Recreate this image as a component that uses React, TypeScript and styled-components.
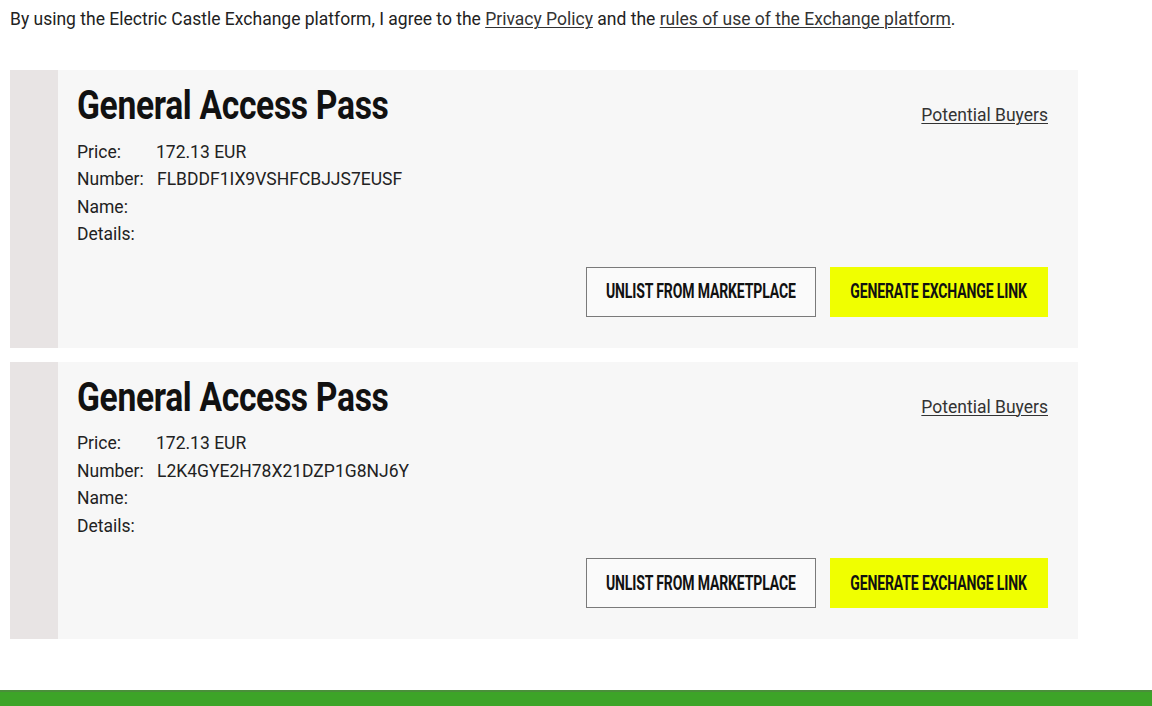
import React from 'react';
import styled, { createGlobalStyle } from 'styled-components';

const GlobalStyle = createGlobalStyle`
  html, body {
    margin: 0;
    padding: 0;
    background: #fff;
  }
  body {
    font-family: Roboto, "Liberation Sans", sans-serif;
    color: #222;
  }
`;

const Page = styled.div`
  width: 1152px;
  height: 706px;
  display: flex;
  flex-direction: column;
  overflow: hidden;
`;

const Content = styled.main`
  flex: 1;
  padding: 0 10px;
`;

const Agreement = styled.p`
  margin: 0;
  padding-top: 7px;
  font-size: 17.5px;
  line-height: 24px;
  color: #222;
`;

const TextLink = styled.a`
  color: #333;
  text-decoration: underline;
  text-underline-offset: 2px;
  text-decoration-thickness: 1px;
`;

const List = styled.div`
  margin-top: 39px;
  width: 1068px;
  display: flex;
  flex-direction: column;
  gap: 14px;
`;

const Card = styled.article`
  display: flex;
  height: 277.5px;
  background: #f7f7f7;
`;

const Stripe = styled.div`
  width: 48px;
  flex-shrink: 0;
  background: #e8e4e4;
`;

const Body = styled.div`
  flex: 1;
  display: flex;
  flex-direction: column;
  padding: 13px 30px 31px 19px;
`;

const Header = styled.div`
  display: flex;
  justify-content: space-between;
  align-items: flex-start;
`;

// condensed display face: no condensed family installed, so squeeze Roboto
const Title = styled.h2`
  margin: 0;
  display: inline-block;
  font-family: Roboto, "Liberation Sans", sans-serif;
  font-weight: 700;
  font-size: 41px;
  line-height: 44px;
  color: #111;
  letter-spacing: -0.4px;
  white-space: nowrap;
  transform: scaleX(0.82);
  transform-origin: left center;
`;

const BuyersLink = styled(TextLink)`
  margin-top: 20px;
  font-size: 17.5px;
  line-height: 24px;
`;

const Details = styled.dl`
  margin: 11px 0 0;
  display: grid;
  grid-template-columns: 79px auto;
  grid-auto-rows: 27.5px;
  align-items: center;
  font-size: 17.5px;
  color: #222;
`;

const Label = styled.dt`
  margin: 0;
`;

const Value = styled.dd<{ $shift?: number }>`
  margin: 0;
  padding-left: ${(p) => p.$shift ?? 0}px;
`;

const Actions = styled.div`
  margin-top: auto;
  display: flex;
  justify-content: flex-end;
  gap: 14px;
`;

const Button = styled.button<{ $primary?: boolean }>`
  height: 50px;
  width: ${(p) => (p.$primary ? 218 : 230)}px;
  padding: 0;
  display: flex;
  align-items: center;
  justify-content: center;
  font-family: Roboto, "Liberation Sans", sans-serif;
  font-weight: 700;
  font-size: 19.5px;
  text-transform: uppercase;
  color: #111;
  cursor: pointer;
  background: ${(p) => (p.$primary ? '#f0ff00' : '#fafafa')};
  border: ${(p) => (p.$primary ? 'none' : '1px solid #7a7a7a')};
`;

const ButtonLabel = styled.span`
  display: inline-block;
  white-space: nowrap;
  letter-spacing: -0.2px;
  transform: scaleX(0.72);
  transform-origin: center;
`;

const Footer = styled.footer`
  height: 16px;
  background: #3da428;
  border-top: 2px solid #4a8f3a;
  box-sizing: border-box;
`;

type Pass = { number: string };

const passes: Pass[] = [
  { number: 'FLBDDF1IX9VSHFCBJJS7EUSF' },
  { number: 'L2K4GYE2H78X21DZP1G8NJ6Y' },
];

const PassCard: React.FC<{ pass: Pass }> = ({ pass }) => (
  <Card>
    <Stripe />
    <Body>
      <Header>
        <Title>General Access Pass</Title>
        <BuyersLink href="#">Potential Buyers</BuyersLink>
      </Header>
      <Details>
        <Label>Price:</Label>
        <Value>172.13 EUR</Value>
        <Label>Number:</Label>
        <Value $shift={1}>{pass.number}</Value>
        <Label>Name:</Label>
        <Value />
        <Label>Details:</Label>
        <Value />
      </Details>
      <Actions>
        <Button>
          <ButtonLabel>Unlist from marketplace</ButtonLabel>
        </Button>
        <Button $primary>
          <ButtonLabel>Generate exchange link</ButtonLabel>
        </Button>
      </Actions>
    </Body>
  </Card>
);

const App: React.FC = () => (
  <Page>
    <GlobalStyle />
    <Content>
      <Agreement>
        By using the Electric Castle Exchange platform, I agree to the{' '}
        <TextLink href="#">Privacy Policy</TextLink> and the{' '}
        <TextLink href="#">rules of use of the Exchange platform</TextLink>.
      </Agreement>
      <List>
        {passes.map((p) => (
          <PassCard key={p.number} pass={p} />
        ))}
      </List>
    </Content>
    <Footer />
  </Page>
);

export default App;
